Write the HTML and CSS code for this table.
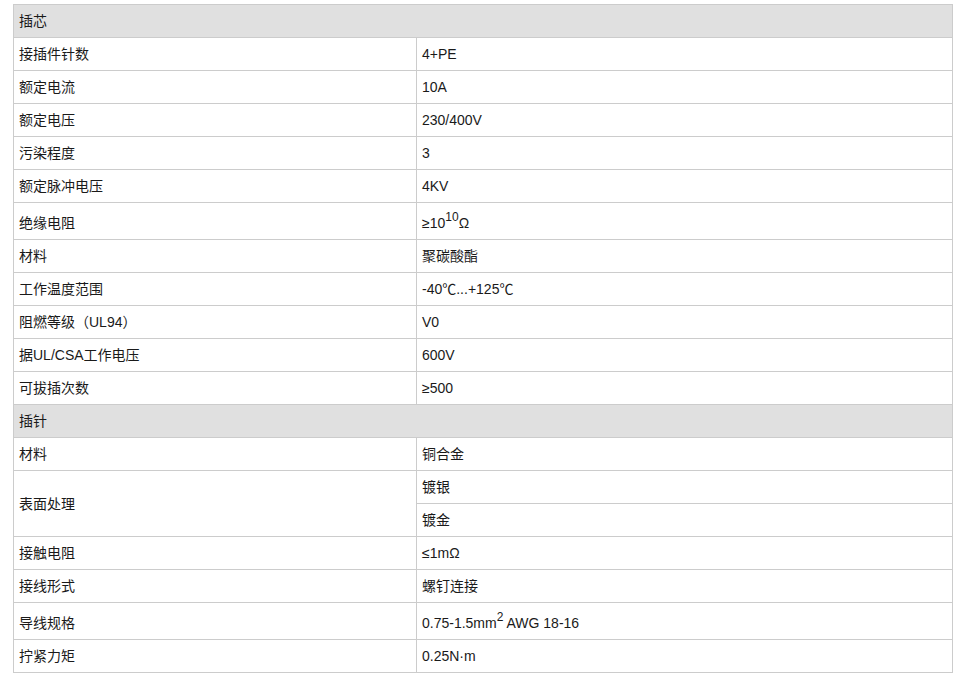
FILE: index.html
```html
<!DOCTYPE html>
<html lang="zh-CN">
<head>
<meta charset="utf-8">
<title>参数</title>
<link rel="stylesheet" href="styles.css">
</head>
<body>
<table class="spec">
  <colgroup><col class="c1"><col class="c2"></colgroup>
  <tbody>
    <tr class="head"><td colspan="2">插芯</td></tr>
    <tr><td>接插件针数</td><td>4+PE</td></tr>
    <tr><td>额定电流</td><td>10A</td></tr>
    <tr><td>额定电压</td><td>230/400V</td></tr>
    <tr><td>污染程度</td><td>3</td></tr>
    <tr><td>额定脉冲电压</td><td>4KV</td></tr>
    <tr class="tall"><td>绝缘电阻</td><td>≥10<sup>10</sup>Ω</td></tr>
    <tr><td>材料</td><td>聚碳酸酯</td></tr>
    <tr><td>工作温度范围</td><td>-40℃...+125℃</td></tr>
    <tr><td>阻燃等级（UL94）</td><td>V0</td></tr>
    <tr><td>据UL/CSA工作电压</td><td>600V</td></tr>
    <tr><td>可拔插次数</td><td>≥500</td></tr>
    <tr class="head"><td colspan="2">插针</td></tr>
    <tr><td>材料</td><td>铜合金</td></tr>
    <tr><td rowspan="2">表面处理</td><td>镀银</td></tr>
    <tr><td>镀金</td></tr>
    <tr><td>接触电阻</td><td>≤1mΩ</td></tr>
    <tr><td>接线形式</td><td>螺钉连接</td></tr>
    <tr class="tall"><td>导线规格</td><td>0.75-1.5mm<sup>2</sup> AWG 18-16</td></tr>
    <tr><td>拧紧力矩</td><td>0.25N·m</td></tr>
  </tbody>
</table>
</body>
</html>
```

FILE: styles.css
```css
html, body {
  background: #ffffff;
}
body {
  margin: 4px 0 0 13px;
  font-family: "Liberation Sans", Arial, "Noto Sans CJK SC", sans-serif;
  font-size: 14px;
  color: #1a1a1a;
}
.spec {
  border-collapse: collapse;
  width: 940px;
  table-layout: fixed;
}
.c1 { width: 403px; }
.spec td {
  border: 1px solid #cccccc;
  height: 33px;
  padding: 0 5px;
  vertical-align: middle;
  line-height: 16px;
  box-sizing: border-box;
  white-space: nowrap;
}
.spec tr.tall td {
  height: 37px;
  padding-top: 3px;
}
.spec tr.head td {
  background: #e0e0e0;
}
.spec sup {
  font-size: 12px;
  line-height: 0;
  vertical-align: 7px;
}
```
